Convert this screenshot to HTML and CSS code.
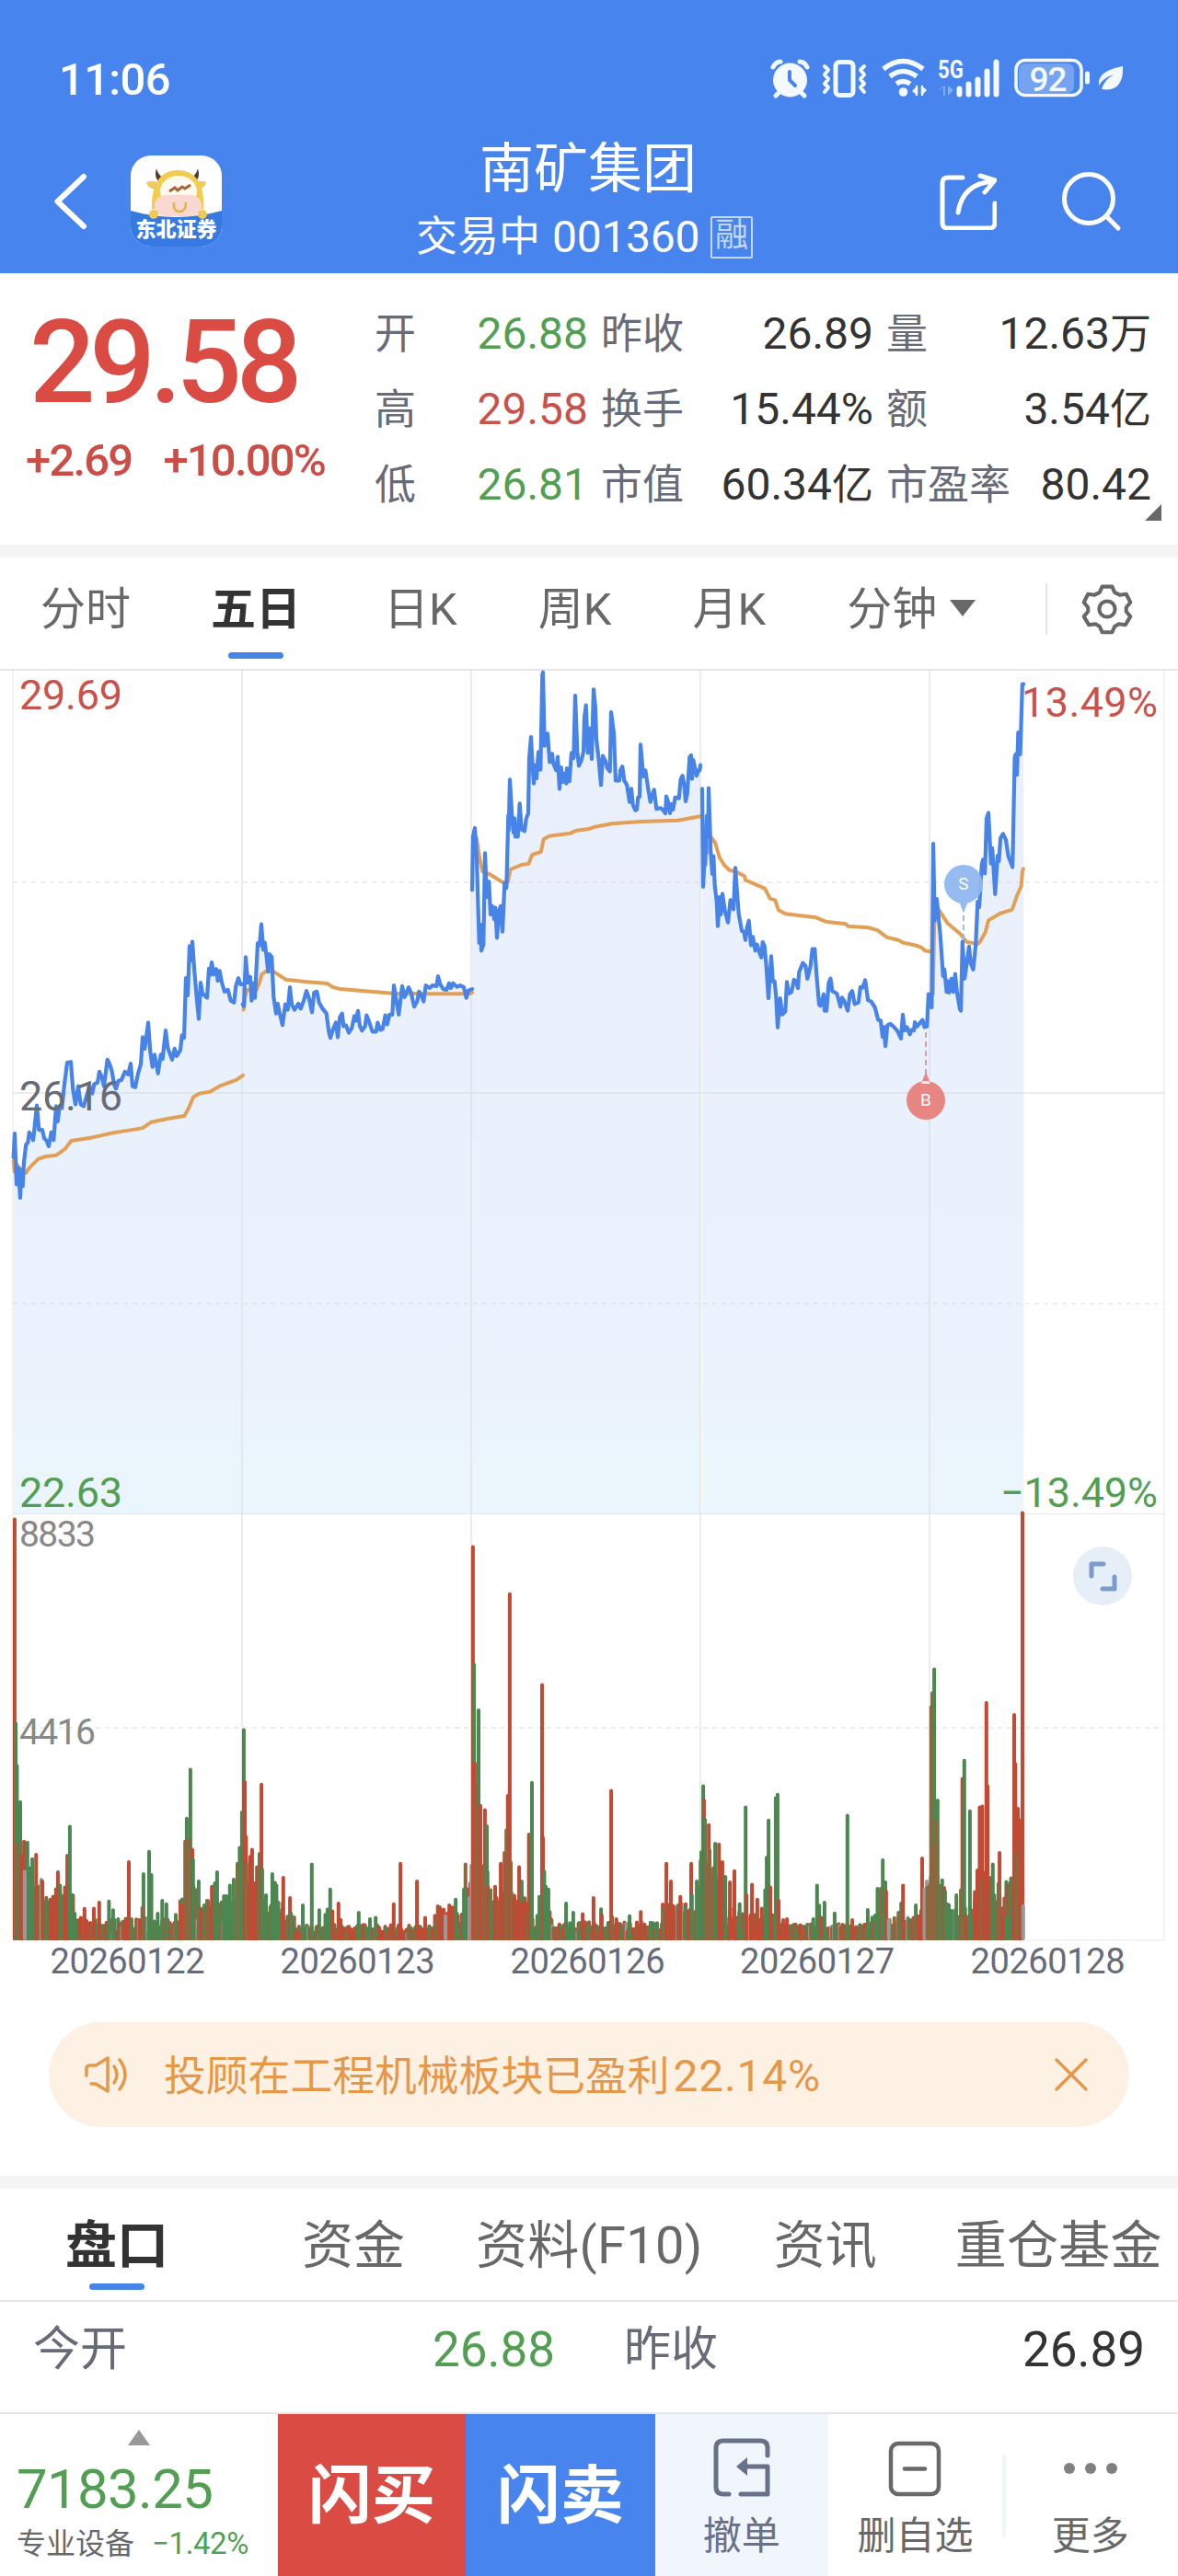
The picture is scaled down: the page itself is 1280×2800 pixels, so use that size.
FILE: index.html
```html
<!DOCTYPE html>
<html lang="zh-CN">

<head>
    <meta charset="utf-8" />
    <title>南矿集团</title>
    <link rel="stylesheet" href="styles.css">
</head>

<body>

<div class="header">
    <div class="status">
        <span class="time">11:06</span>
        <svg class="status-icons" width="390" height="50" viewBox="835 62 390 50">
            <g fill="#f4f9ff" stroke="#f4f9ff" stroke-linecap="round" stroke-linejoin="round">
                <!-- 闹钟 -->
                <circle cx="858.500" cy="88" r="18.500" stroke="none"/>
                <path d="M840 74q3-6 8-6M877 74q-3-6-8-6M847 101l-4 4M870 101l4 4" fill="none" stroke-width="5"/>
                <path d="M858 79v9l6 6" fill="none" stroke="#4784ed" stroke-width="4"/>
                <!-- 震动 -->
                <rect x="908" y="68.500" width="19" height="36" rx="4" fill="none" stroke-width="5"/>
                <path d="M896 73l4 4-4 5 4 5-4 5 4 4-4 5M939 73l-4 4 4 5-4 5 4 5-4 4 4 5" fill="none" stroke-width="4"/>
                <!-- wifi -->
                <path d="M960 76q21-17 43 0M967 84q14-11 29 0M974 92q7-5 15 0" fill="none" stroke-width="5.500" stroke-linecap="butt"/>
                <circle cx="981.500" cy="101" r="4.800" stroke="none"/>
                <path d="M991 100l6-6v11M1001 94v11l6-6" stroke="none"/>
                <path d="M996 95v9M1002 95v9" fill="none" stroke-width="2.500"/>
                <text x="1019" y="86" class="net" stroke="none" textLength="28" lengthAdjust="spacingAndGlyphs">5G</text>
                <path d="M1020 100l5-6v11h2v-11M1030 94v11l6-6z" stroke="none" opacity=".35"/>
                <path d="M1042.500 97.500v6M1052.500 92.500v11M1062.500 87.500v16M1072.500 78.500v25M1082.500 68.500v35" fill="none" stroke-width="6"/>
                <!-- 电池 -->
                <rect x="1107" y="70" width="60" height="32" rx="7" fill="#fff" fill-opacity=".25" stroke="none"/>
                <rect x="1104" y="66.500" width="71" height="38" rx="10" fill="none" stroke-width="3.500"/>
                <path d="M1181.500 81v9" fill="none" stroke-width="5"/>
                <text x="1138.500" y="100" class="battery" stroke="none">92</text>
                <path d="M1220 73c-14 3-27 7-26 21 4-7 10-10 16-12-5 3-10 7-13 16 18 3 24-9 23-25z" stroke="none"/>
            </g>
        </svg>
    </div>
    <div class="navbar">
        <svg class="back" width="36" height="62" viewBox="0 0 36 62"><path d="M32 4L3.500 31 32 58" fill="none" stroke="#fff" stroke-width="6" stroke-linecap="round" stroke-linejoin="round"/></svg>
        <svg class="logo" width="99" height="99" viewBox="0 0 99 99">
            <defs>
                <clipPath id="logoClip"><rect width="99" height="99" rx="22"/></clipPath>
            </defs>
            <g clip-path="url(#logoClip)">
                <rect width="99" height="99" fill="#fff"/>
                <path d="M0 60q49 14 99 0v39H0z" fill="#3679e0"/>
                <path d="M28 14q2 8 8 10l-5 5q-6-5-3-15zM73 14q-2 8-8 10l5 5q6-5 3-15z" fill="#57362c"/>
                <path d="M17 29q8-3 13 1l-4 7q-8-2-9-8zM82 29q-8-3-13 1l4 7q8-2 9-8z" fill="#eecb65"/>
                <path d="M23 58c-1-28 10-42 28-42s30 13 28 42z" fill="#f2cc4f"/>
                <ellipse cx="52" cy="39" rx="20" ry="17" fill="#fffaf0"/>
                <rect x="26" y="43" width="51" height="23" rx="12" fill="#f8d8d0"/>
                <path d="M42 39l6-4 3 3 5-4 3 2 6-4" fill="none" stroke="#a56438" stroke-width="3"/>
                <path d="M47 51q-1 10 6 10t7-10" fill="none" stroke="#dfb252" stroke-width="2.500"/>
                <circle cx="25" cy="64" r="5" fill="#efc858"/>
                <circle cx="78" cy="64" r="5" fill="#efc858"/>
                <text x="49.500" y="88" class="logo-text">东北证券</text>
            </g>
        </svg>
        <div class="title">
            <h1>南矿集团</h1>
            <p>交易中 <span>001360</span><em>融</em></p>
        </div>
        <svg class="share" width="62" height="62" viewBox="0 0 62 62"><g fill="none" stroke="#fff" stroke-width="5" stroke-linecap="round" stroke-linejoin="round"><path d="M25 5H9Q3 5 3 11v43q0 6 6 6h45q6 0 6-6V33"/><path d="M20 43Q25 11 59 9M44 3l16 5-11 13"/></g></svg>
        <svg class="search" width="66" height="66" viewBox="0 0 66 66"><g fill="none" stroke="#fff" stroke-width="5" stroke-linecap="round"><circle cx="30" cy="30" r="26.500"/><path d="M50 50l12 12"/></g></svg>
    </div>
</div>

<div class="quote">
    <div class="price">
        <strong>29.58</strong>
        <div class="change"><span>+2.69</span><span>+10.00%</span></div>
    </div>
    <div class="stats">
        <div><label>开</label><b class="green">26.88</b></div>
        <div><label>昨收</label><b>26.89</b></div>
        <div><label>量</label><b>12.63<s>万</s></b></div>
        <div><label>高</label><b class="red">29.58</b></div>
        <div><label>换手</label><b>15.44%</b></div>
        <div><label>额</label><b>3.54<s>亿</s></b></div>
        <div><label>低</label><b class="green">26.81</b></div>
        <div><label>市值</label><b>60.34<s>亿</s></b></div>
        <div><label>市盈率</label><b>80.42</b></div>
    </div>
    <i class="corner"></i>
</div>

<div class="period">
    <span>分时</span>
    <span class="current">五日</span>
    <span>日K</span>
    <span>周K</span>
    <span>月K</span>
    <span class="minute">分钟<i></i></span>
    <svg class="gear" width="62" height="62" viewBox="-31 -31 62 62">
        <g fill="none" stroke="#686868" stroke-width="4.500" stroke-linejoin="round">
            <path d="M-6-27H6L9-20 15-17 23-18 28-8 23-2V3L28 9 22 19 14 18 9 21 6 28H-6L-9 21-14 18-22 19-28 9-23 3V-2L-28-8-23-18-15-17-9-20Z"/>
            <circle r="9.500"/>
        </g>
    </svg>
</div>

<svg class="chart" width="1280" height="1432" viewBox="0 727 1280 1432">
    <defs>
        <linearGradient id="areaFill" gradientUnits="userSpaceOnUse" x1="0" y1="728" x2="0" y2="1645">
            <stop offset="0" stop-color="#e9f0fc"/>
            <stop offset=".5" stop-color="#e9f1fc"/>
            <stop offset=".85" stop-color="#eaf3fc"/>
            <stop offset="1" stop-color="#eaf6fd"/>
        </linearGradient>
    </defs>
    <g id="area" fill="url(#areaFill)"></g>
    <g class="grid">
        <path d="M0 728H1280" stroke-width="2"/>
        <path d="M14 728V2109M1265 728V2109M14 1645.500H1265M14 2109H1265"/>
        <path d="M263 728V2109M512 728V2109M761 728V2109M1010 728V2109M14 1188H1265" stroke-width="1.600"/>
        <path class="dash" d="M14 959H1265M14 1417H1265M14 1878H1265" stroke-width="1.600"/>
    </g>
    <g id="volume" fill="none" stroke-width="4" stroke-linecap="round"></g>
    <path id="average" fill="none" stroke="#e2a057" stroke-width="4" stroke-linejoin="round" stroke-linecap="round"/>
    <path id="line" fill="none" stroke="#4884e8" stroke-width="4.200" stroke-linejoin="round" stroke-linecap="round"/>

    <g class="marker">
        <path d="M1047 985V1022" stroke="#9abcf0"/>
        <path d="M1042 980h10l-5 12zM1026 961a21 21 0 1 1 42 0 21 21 0 1 1-42 0" fill="#8fb7ef"/>
        <text x="1047" y="967">S</text>
        <path d="M1006 1122V1168" stroke="#dd9ba5"/>
        <path d="M1001 1178h10l-5-13zM985 1196a21 21 0 1 1 42 0 21 21 0 1 1-42 0" fill="#e77f7b"/>
        <text x="1006" y="1202">B</text>
    </g>

    <g class="scale">
        <text x="21" y="771" fill="#c8534d" textLength="112">29.69</text>
        <text x="21" y="1207" fill="#676b77" textLength="112">26.16</text>
        <text x="21" y="1638" fill="#529f54" textLength="112">22.63</text>
        <text x="1258" y="779" fill="#c8534d" text-anchor="end" textLength="148">13.49%</text>
        <text x="1258" y="1638" fill="#529f54" text-anchor="end" textLength="171">−13.49%</text>
    </g>
    <g class="volume-scale">
        <text x="21" y="1681" textLength="83">8833</text>
        <text x="21" y="1896" textLength="83">4416</text>
    </g>
    <g class="dates">
        <text x="138.500" y="2145" textLength="168">20260122</text>
        <text x="388.500" y="2145" textLength="168">20260123</text>
        <text x="638.500" y="2145" textLength="168">20260126</text>
        <text x="888" y="2145" textLength="168">20260127</text>
        <text x="1138.500" y="2145" textLength="168">20260128</text>
    </g>

    <circle cx="1198" cy="1713" r="32" fill="#e6eff8"/>
    <path d="M1186 1713v-13h13M1198 1727h13v-13" fill="none" stroke="#7b9bca" stroke-width="5" stroke-linejoin="round" stroke-linecap="round"/>
</svg>

<div class="notice">
    <svg width="48" height="42" viewBox="0 0 48 42"><g fill="none" stroke="#e6984a" stroke-width="3.500" stroke-linecap="round" stroke-linejoin="round"><path d="M3 22v-8q0-3 4-3h6L26 3v36L13 31H8M33 12q6 9 0 18M39 5q12 16 0 32"/></g></svg>
    <p>投顾在工程机械板块已盈利<span>22.14%</span></p>
    <svg width="38" height="38" viewBox="0 0 38 38"><path d="M3 3l32 32M35 3L3 35" stroke="#e6984a" stroke-width="3.500" stroke-linecap="round"/></svg>
</div>

<div class="tabs">
    <span class="current">盘口</span>
    <span>资金</span>
    <span>资料(F10)</span>
    <span>资讯</span>
    <span>重仓基金</span>
</div>

<div class="detail">
    <div><label>今开</label><b class="green">26.88</b></div>
    <div><label>昨收</label><b>26.89</b></div>
</div>

<div class="footer">
    <div class="index">
        <i></i>
        <strong>7183.25</strong>
        <p>专业设备<span>−1.42%</span></p>
    </div>
    <div class="buy">闪买</div>
    <div class="sell">闪卖</div>
    <div class="action cancel">
        <svg width="64" height="66" viewBox="0 0 64 66"><g fill="none" stroke="#687187" stroke-width="5" stroke-linecap="round" stroke-linejoin="round"><path d="M60 19V11q0-8-8-8H12Q4 3 4 11v42q0 8 8 8h6M31 61h29V31H34"/></g><path d="M26 31l12-10v20z" fill="#687187"/></svg>
        <span>撤单</span>
    </div>
    <div class="action remove">
        <svg width="60" height="66" viewBox="0 0 60 66"><g fill="none" stroke="#686868" stroke-width="4.500" stroke-linecap="round"><rect x="4" y="6" width="52" height="55" rx="8"/><path d="M19 33.500h22"/></g></svg>
        <span>删自选</span>
    </div>
    <div class="action more">
        <svg width="60" height="66" viewBox="0 0 60 66"><g fill="#808080"><circle cx="7" cy="33" r="6"/><circle cx="30" cy="33" r="6"/><circle cx="53" cy="33" r="6"/></g></svg>
        <span>更多</span>
    </div>
</div>

<script src="chart.js"></script>
</body>

</html>
```
FILE: styles.css
```css
* {
    padding: 0;
    margin: 0;
    box-sizing: border-box;
}

body {
    width: 1280px;
    height: 2800px;
    overflow: hidden;
    background: #fff;
    color: #333;
    font-family: Roboto, "Noto Sans CJK SC", sans-serif;
}

svg {
    display: block;
    flex: none;
}

b, em, i {
    font-weight: normal;
    font-style: normal;
}

.green {
    color: #529f54 !important;
}

.red {
    color: #c8534d !important;
}

.header {
    height: 297px;
    background: #4784ed;
    color: #fff;
}

.status {
    height: 140px;
    padding: 32px 55px 0 64px;
    display: flex;
    justify-content: space-between;
    align-items: center;
}

.time {
    padding-top: 2px;
    font-size: 49px;
    font-weight: 500;
    line-height: 60px;
    letter-spacing: -.7px;
}

.net {
    font-size: 27px;
    font-weight: 700;
}

.battery {
    font-size: 37px;
    font-weight: 500;
    text-anchor: middle;
    letter-spacing: -1px;
}

.navbar {
    height: 157px;
    padding: 0 0 0 59px;
    display: flex;
}

.back {
    margin-top: 48px;
}

.logo {
    margin: 29px 0 0 47px;
}

.logo-text {
    font-size: 22px;
    font-weight: 900;
    fill: #fff;
    text-anchor: middle;
}

.title {
    width: 380px;
    margin-left: 208px;
    padding-top: 3px;
    text-align: center;
}

.title h1 {
    font-size: 59px;
    font-weight: 400;
    line-height: 82px;
}

.title p {
    display: flex;
    justify-content: center;
    align-items: center;
    margin: -1px 8px 0 0;
    font-size: 45px;
    line-height: 68px;
    white-space: pre;
}

.title p span {
    margin-left: 2px;
    font-size: 48px;
    letter-spacing: -.3px;
}

.title em {
    width: 46px;
    height: 46px;
    margin-left: 12px;
    border: 2px solid #c2d7fb;
    border-radius: 2px;
    font-size: 36px;
    line-height: 38px;
    color: #c2d7fb;
}

.share {
    margin: 48px 0 0 192px;
}

.search {
    margin: 46px 0 0 70px;
}

.quote {
    position: relative;
    height: 309px;
    display: flex;
    border-bottom: 14px solid #f4f4f4;
}

.price {
    width: 407px;
    padding: 23px 0 0 32px;
    color: #d94b43;
}

.price strong {
    display: block;
    font-size: 126px;
    font-weight: 500;
    line-height: 148px;
    letter-spacing: -6.3px;
}

.change {
    display: flex;
    margin: 6px 0 0 -4px;
    font-size: 49px;
    font-weight: 500;
    line-height: 54px;
    letter-spacing: -1.8px;
    color: #ca4e47;
}

.change span + span {
    margin-left: 34px;
}

.stats {
    display: grid;
    grid-template-columns: 232px 296px 288px;
    grid-auto-rows: 82px;
    column-gap: 14px;
    padding-top: 25px;
}

.stats div {
    display: flex;
    justify-content: space-between;
    align-items: baseline;
    font-size: 45px;
    line-height: 82px;
    white-space: nowrap;
}

.stats label {
    color: #676b77;
}

.stats b {
    font-size: 48px;
    color: #333;
}

.stats s {
    font-size: 45px;
    text-decoration: none;
}

.corner {
    position: absolute;
    left: 1244px;
    top: 251px;
    border-left: 18px solid transparent;
    border-bottom: 18px solid #686868;
}

.period {
    height: 121px;
    display: flex;
    padding-left: 44px;
    font-size: 49px;
    line-height: 114px;
    color: #686868;
}

.period span {
    margin-right: 88px;
}

.period span:first-child {
    margin-right: 87px;
}

.period .current {
    margin-right: 90px;
}

.current {
    display: flex;
    flex-direction: column;
    align-items: center;
    font-weight: 700;
    color: #333;
}

.current:after {
    content: "";
    width: 60px;
    height: 7px;
    border-radius: 4px;
    background: #4784e8;
}

.period .current:after {
    margin-top: -11px;
}

.period .minute {
    display: flex;
    align-items: center;
    height: 114px;
    margin-right: 0;
}

.minute i {
    margin: -5px 0 0 14px;
    border: 14px solid transparent;
    border-top: 18px solid #686868;
    border-bottom: 0;
}

.gear {
    width: 98px;
    height: 56px;
    margin: 28px 0 0 76px;
    padding-left: 34px;
    border-left: 2px solid #e5e5e5;
    overflow: visible;
}

.grid path {
    fill: none;
    stroke: #d9dadc;
    stroke-opacity: .65;
}

.grid .dash {
    stroke-dasharray: 5 5;
}

.marker path[stroke] {
    stroke-width: 2;
    stroke-dasharray: 6 4;
}

.marker path[fill] {
    fill-opacity: .95;
}

.marker text {
    font-size: 19px;
    fill: #fff;
    text-anchor: middle;
}

.scale {
    font-size: 45px;
}

.volume-scale {
    font-size: 39px;
    fill: #888;
}

.dates {
    font-size: 38px;
    fill: #676b77;
    text-anchor: middle;
}

.notice {
    display: flex;
    align-items: center;
    height: 114px;
    margin: 39px 53px 53px;
    padding: 0 44px 0 38px;
    border-radius: 57px;
    background: #fdf1e4;
    color: #e6984a;
}

.notice p {
    flex: 1;
    margin: -5px 0 0 39px;
    font-size: 45.800px;
}

.notice p span {
    margin-left: 4px;
    font-size: 48px;
    letter-spacing: .8px;
}

.tabs {
    display: flex;
    height: 137px;
    padding-left: 71px;
    border-top: 14px solid #f4f4f4;
    border-bottom: 2px solid #e5e5e5;
    font-size: 56px;
    line-height: 125px;
    color: #686868;
    white-space: nowrap;
}

.tabs span {
    margin-right: 77px;
}

.tabs span:first-child {
    margin-right: 145px;
}

.tabs span:nth-child(3) {
    letter-spacing: .3px;
}

.tabs span:nth-child(4) {
    margin-right: 85px;
}

.tabs span:last-child {
    margin-right: 0;
    letter-spacing: .3px;
}

.tabs .current:after {
    margin-top: -22px;
}

.detail {
    display: flex;
    height: 122px;
    padding: 0 36px;
    border-bottom: 2px solid #e5e5e5;
    font-size: 51px;
    line-height: 104px;
}

.detail div {
    display: flex;
    justify-content: space-between;
    width: 567px;
}

.detail div + div {
    width: 566px;
    margin-left: 75px;
}

.detail label {
    color: #676b77;
}

.detail b {
    font-size: 53px;
}

.footer {
    display: flex;
    height: 176px;
}

.index {
    width: 302px;
    padding: 17px 0 0 18px;
    color: #529f54;
}

.index i {
    display: block;
    width: 24px;
    margin-left: 121px;
    border: 12px solid transparent;
    border-bottom: 17px solid #999;
    border-top: 0;
}

.index strong {
    display: block;
    margin-top: 13px;
    font-size: 60px;
    font-weight: 400;
    line-height: 70px;
    letter-spacing: -.7px;
}

.index p {
    margin-top: 4px;
    font-size: 32px;
    line-height: 40px;
    color: #686868;
    white-space: nowrap;
}

.index p span {
    margin-left: 19px;
    font-size: 33px;
    letter-spacing: -.4px;
    color: #529f54;
}

.buy, .sell {
    width: 205px;
    background: #d94b43;
    color: #fff;
    font-size: 69px;
    font-weight: 700;
    line-height: 179px;
    text-align: center;
}

.sell {
    width: 206px;
    background: #4784ed;
}

.action {
    display: flex;
    flex-direction: column;
    align-items: center;
    width: 188px;
    padding-top: 26px;
    font-size: 42px;
    line-height: 60px;
    color: #686868;
}

.action span {
    margin-top: 11px;
}

.cancel {
    background: #f1f6fd;
    color: #687187;
}

.remove {
    width: 190px;
}

.more {
    width: 191px;
    background: linear-gradient(#f1f6fd, #f1f6fd) no-repeat 0 44px / 4px 90px;
}
```
FILE: chart.js
```js
// 每段: 原点x, 原点y, x比例, y比例, 点
var DAY12 = [0, 720, 3, 2.529];
var DAY34 = [490, 720, 3, 3];
var DAY45 = [740, 720, 2.904, 2.8];

function points(base, str) {
    return str.split(" ").map(function (p) {
        var a = p.split(",");
        return [(base[0] + a[0] / base[2]).toFixed(1), (base[1] + a[1] / base[3]).toFixed(1)];
    });
}

var prices = [
    points(DAY12, "44,1360 48,1295 54,1435 59,1390 66,1472 70,1395 74,1440 78,1375 85,1325 91,1320 95,1292 101,1300 108,1313 113,1275 120,1218 127,1285 138,1285 144,1308 152,1315 159,1330 167,1292 175,1313 183,1220 188,1262 194,1220 202,1225 209,1165 219,1100 231,1098 238,1175 246,1215 255,1165 263,1215 273,1220 283,1190 292,1165 301,1185 307,1160 318,1155 324,1125 332,1140 339,1165 350,1092 358,1105 365,1125 372,1160 378,1172 386,1150 396,1148 407,1125 418,1133 426,1103 432,1165 441,1168 450,1130 459,1105 465,1030 472,1062 483,990 490,1070 497,1112 504,1078 515,1130 524,1078 530,1090 540,1012 547,1060 561,1092 569,1062 576,1082 588,1065 593,1025 600,1032 606,868 612,915 618,780 623,820 627,768 634,850 640,910 648,980 654,880 660,910 675,922 681,842 685,860 690,825 697,858 705,843 710,875 716,848 723,880 732,905 743,900 752,930 763,935 769,890 777,868 784,885 790,885"),
    points(DAY12, "791,940 795,945 801,810 808,880 816,865 820,930 826,882 831,922 840,772 846,778 852,720 858,790 863,770 869,810 874,850 878,802 886,810 892,920 900,965 905,938 912,965 921,997 930,940 938,955 945,893 951,940 960,955 973,938 980,952 990,930 999,903 1008,925 1017,962 1024,908 1033,905 1040,935 1050,950 1064,965 1072,1015 1077,1032 1085,1010 1095,990 1101,1030 1108,975 1115,965 1120,1000 1128,998 1137,1018 1147,1005 1155,972 1160,985 1167,958 1173,1000 1180,1012 1190,1000 1195,970 1202,985 1214,1015 1226,1015 1231,990 1240,1010 1247,1008 1256,970 1262,995 1270,968 1279,968 1284,888 1293,935 1300,968 1311,890 1319,920 1332,893 1340,908 1350,946 1360,932 1366,905 1373,915 1381,932 1388,888 1400,895 1410,888 1423,890 1428,863 1435,885 1445,898 1456,900 1464,882 1470,895 1477,882 1490,892 1500,888 1512,893 1520,922 1527,902 1539,898"),
    points(DAY34, "69,742 72,568 78,540 84,640 92,915 97,855 99,940 106,920 111,622 117,765 124,715 129,822 135,795 141,838 145,800 150,898 157,810 162,795 168,878 175,720 181,735 187,500 188,548 192,382 200,520 204,555 207,508 210,568 218,568 224,460 230,545 240,550 245,510 252,492 255,315 261,243 266,340 270,395 276,335 279,378 285,292 292,350 298,40 300,32 305,272 315,232 322,325 330,298 333,328 343,352 348,308 354,412 359,342 364,390 370,362 376,395 378,345 386,388 393,295 400,312 405,108 412,290 417,337 425,320 432,290 435,180 440,140 446,295 453,215 459,315 465,88 471,150 474,250 482,320 489,400 495,305 503,320 510,345 518,355 522,162 531,230 537,385 549,385 553,350 559,340 565,385 574,400 582,455 588,412 593,465 601,482 606,480 610,440 615,438 618,268 627,372 634,352 643,412 650,455 662,415 670,478 683,475 690,480 699,492 702,437 708,455 714,492 718,462 724,480 731,440 743,443 749,380 755,370 761,405 765,453 770,430 778,310 783,303 786,380 790,318 801,370 806,352 811,352 813,335"),
    points(DAY34, "819,412 822,732 826,655 829,660 834,500 838,570 840,410 847,620 852,690 856,632 860,730 866,778 870,860 876,765 880,822 885,755 893,810 903,848 911,775 921,805 927,670 938,820 948,875 955,878 960,905 965,865 971,842 978,922 984,895 992,940 998,920 1005,945 1012,962 1016,912 1022,925 1028,990 1035,1095 1044,958 1049,1040 1055,1040 1060,1090 1065,1190 1073,1095 1080,1148 1090,1138 1095,1042 1102,1080 1110,1075 1118,1035 1125,1040 1131,1062 1135,1010 1147,980 1156,990 1162,1032 1172,990 1178,935 1186,935 1192,1020 1200,1115").concat(
        points(DAY45, "440,1045 450,1010 453,1060 459,1060 466,975 472,962 477,1000 492,1008 503,1048 508,1020 515,1030 526,1060 533,1010 540,1000 548,1040 560,1035 566,988 573,990 581,967 590,1028 600,1032 612,1050 622,1088 630,1090 636,1140 640,1110 645,1168 651,1105 660,1100 670,1108 683,1122 694,1145 700,1072 706,1120 713,1110 722,1132 728,1118 735,1120 738,1095 745,1108 762,1088 768,1110 776,1108 781,1010 786,1045 791,1050 796,552 800,785 807,720 818,830 827,955 831,935 838,1003 841,970 846,1005 853,963 859,1003 865,948 871,1005 880,1055 883,1060 888,850 895,962 903,905 909,865 914,915 922,935 930,860 936,728 941,745 949,615 953,600 959,642 964,475 970,458 978,612 982,565 991,705 999,588 1003,605 1008,535 1016,522 1025,540 1033,590 1046,623 1053,290 1056,280 1060,342 1064,213 1070,280 1077,66 1081,66"))
];

var averages = [
    points(DAY12, "44,1370 47,1400 55,1380 66,1392 85,1403 95,1390 125,1365 150,1358 182,1355 213,1337 232,1315 300,1306 370,1293 430,1285 465,1280 492,1264 550,1254 601,1247 615,1225 630,1195 650,1185 685,1180 715,1165 770,1148 792,1135"),
    points(DAY12, "794,955 800,915 806,900 836,900 846,880 853,858 865,850 892,850 932,872 1000,878 1067,883 1083,892 1110,898 1180,903 1280,910 1400,911 1530,911 1539,908"),
    points(DAY34, "76,560 84,575 92,632 103,682 125,690 168,717 185,717 194,675 230,660 253,657 265,627 293,618 302,577 320,566 390,557 410,548 450,543 470,536 525,526 620,519 740,515 813,502"),
    points(DAY34, "836,620 840,590 850,572 862,590 875,635 890,660 908,678 928,682 957,697 960,710 1023,737 1040,770 1057,775 1068,808 1090,820 1190,832").concat(
        points(DAY45, "460,790 520,796 527,803 590,807 620,815 650,837 685,845 700,853 740,861 757,867 772,878 786,880")),
    points(DAY45, "795,1010 799,800 806,760 815,755 840,793 883,828 900,850 935,857 942,852 960,822 970,785 1005,765 1045,752 1060,710 1074,680 1077,635 1080,628")
];

function toPath(list) {
    return list.map(function (seg) {
        return "M" + seg.join("L");
    }).join("");
}

document.getElementById("line").setAttribute("d", toPath(prices));
document.getElementById("average").setAttribute("d", toPath(averages));

var area = "";
for (var i = 0; i < prices.length; i++) {
    var seg = prices[i];
    area += '<path d="M' + seg[0][0] + ' 1645L' + seg.join("L") + 'L' + seg[seg.length - 1][0] + ' 1645Z"/>';
}
document.getElementById("area").innerHTML = area;

// 成交量
var colors = {r: "#c04a33", g: "#4c8650", n: "#8d673f", h: "#999"};
var bars = [];

function bar(x, h, c) {
    bars.push('<path d="M' + x.toFixed(1) + ' 2107V' + (2109 - h).toFixed(1) + '" stroke="' + colors[c] + '"/>');
}

// 底部密集小量: 结束x, 最大高度
var levels = [[35, 80], [52, 62], [80, 52], [100, 26], [195, 24], [214, 60], [260, 44], [286, 75], [308, 42],
    [320, 26], [470, 17], [505, 38], [530, 85], [572, 52], [600, 34], [718, 20], [758, 40], [788, 75],
    [808, 36], [845, 28], [945, 18], [1000, 26], [1010, 42], [1026, 75], [1050, 40], [1093, 52], [1114, 70]];
var seed = 7;
function rnd() {
    seed = (seed * 16807) % 2147483647;
    return seed / 2147483647;
}
var level = 0;
for (var x = 16; x < 1112; x += 1.04) {
    while (x > levels[level][0]) level++;
    var r = rnd();
    bar(x, levels[level][1] * (.3 + .7 * rnd()), r < .4 ? "r" : r < .68 ? "g" : r < .95 ? "n" : "h");
}

var left = "39,185,r 42,765,g 45,885,g 54,988,g 45,1110,n 57,1140,r 64,1100,r 73,1103,g 66,1185,h 79,1175,g 86,1150,g 96,1137,r 110,1208,h 113,1213,r 124,1268,g 134,1265,r 154,1187,r 160,1225,g 149,1235,r 173,1230,r 179,1140,r 186,1058,g 192,1252,g 199,1305,g 225,1291,r 250,1290,r 264,1273,r 290,1270,g 301,1295,g 343,1158,r 331,1328,r 350,1320,g 382,1192,g 397,1129,g 403,1195,g 379,1288,n 372,1323,r 432,1268,g 443,1278,g 468,1308,g 420,1305,g 483,1282,r 497,1035,g 507,896,g 493,1100,n 502,1095,n 512,1123,r 514,1152,g 529,1213,g 534,1290,r 564,1228,r 572,1218,g 578,1187,g 596,1255,g 612,1225,g 622,1208,g 603,1255,g 632,1163,n 638,1118,g 644,1017,g 649,783,g 652,931,r 655,1087,r 656,1163,n 671,1123,r 666,1143,r 684,1173,r 691,1135,g 696,938,r 698,1180,g 678,1218,r 725,1192,g 732,1217,g 736,1225,g 708,1252,g 741,1273,g 754,1203,r 772,1260,r 775,1305,g 806,1281,g 830,1165,g 850,1295,g 866,1308,g 872,1293,g 879,1236,g 885,1298,r 901,1276,r 907,1322,r 955,1302,g 985,1320,g 1000,1316,g 1048,1278,r 1066,1163,r 1110,1213,r 1132,1316,r 1171,1287,r 1181,1293,r 1186,1312,h 1196,1281,r 1204,1287,r 1213,1265,g 1235,1236,g 1245,1260,h 1240,1240,g 1255,1168,h 1259,263,r 1262,598,g 1274,727,g 1264,878,r 1279,998,r 1268,942,n 1291,1011,r 1296,1056,g 1286,1170,n 1299,1228,r 1306,1238,g 1318,1228,r 1333,1163,r 1343,1132,r 1352,970,r 1357,397,r 1348,1068,n 1360,1160,n 1382,1173,r 1389,1213,g 1391,1276,r 1369,1260,r 1408,1080,r 1416,933,g 1443,655,r 1446,1090,r 1449,1186,g 1453,1228,g 1460,1236,g 1436,1257,g 1507,1276,g 1526,1302,g 1551,1306,r";
var right = "12,1260,r 32,1292,g 34,1310,r 59,956,r 62,1315,n 73,1320,r 108,1312,g 138,1300,r 164,1330,g 181,1332,g 198,1290,g 206,1163,r 218,1213,r 225,1284,r 243,1257,r 257,1286,g 264,1298,r 272,1163,r 274,1252,g 287,1213,g 297,1155,n 299,1130,g 304,943,g 306,983,r 309,1038,g 319,1053,r 321,1125,n 313,1165,n 331,1175,n 336,1106,g 346,1108,r 355,1158,r 363,1200,g 375,1216,r 387,1184,r 401,1278,g 417,1003,g 419,1252,r 434,1222,r 448,1265,r 460,1290,r 473,1145,g 469,1238,g 478,1040,g 483,1230,r 497,977,g 502,967,g 505,1268,r 517,1323,r 527,1320,r 607,1225,g 613,1282,g 618,1316,r 627,1273,g 597,1320,g 654,1304,g 688,1026,g 701,1323,r 742,1294,g 768,1234,g 777,1234,n 782,1153,g 789,1216,g 791,1242,r 762,1310,g 798,1323,h 824,1302,n 831,1276,g 836,1225,r 870,1281,g 877,1312,r 887,1148,r 893,1235,h 899,1213,h 901,1230,n 907,1225,n 911,718,n 914,678,n 919,611,g 928,983,g 925,1040,n 919,1115,n 933,1244,g 946,1232,r 948,1242,g 958,1281,g 964,1298,g 978,1252,g 994,922,r 999,870,g 990,1238,n 1014,1014,g 1004,1312,r 1027,1243,r 1034,1182,r 1040,1003,r 1047,1000,r 1058,706,r 1061,943,r 1045,1216,n 1052,1188,r 1070,1203,n 1075,1165,g 1079,1252,g 1093,1132,r 1090,1220,n 1101,1290,r 1112,1318,g 1132,740,r 1135,880,r 1142,1007,r 1144,1100,n 1148,1040,r 1137,1135,n 1154,167,r 1156,1284,h";

function spikes(str, x0) {
    str.split(" ").forEach(function (s) {
        var a = s.split(",");
        bar(x0 + a[0] / 2.45, (1383 - a[1]) / 2.613 - 1, a[2]);
    });
}
spikes(left, 0);
spikes(right, 640);
document.getElementById("volume").innerHTML = bars.join("");
```
